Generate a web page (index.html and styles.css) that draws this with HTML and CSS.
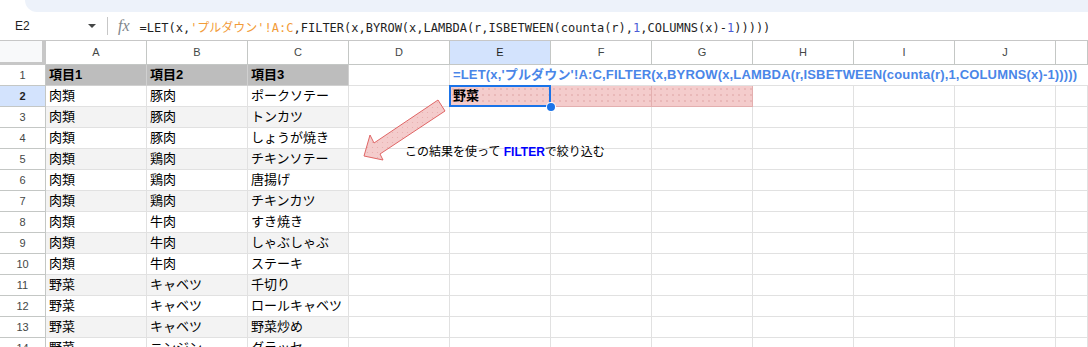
FILE: index.html
```html
<!DOCTYPE html>
<html lang="ja">
<head>
  <meta charset="UTF-8">
  <title>プルダウン - FILTER</title>
  <link rel="stylesheet" href="styles.css">
</head>
<body>
  <div class="topband"></div>

  <div class="formula-bar">
    <div class="name-box">E2</div>
    <span class="caret"></span>
    <span class="sep"></span>
    <span class="fx">fx</span>
    <div class="formula">=LET(x,<span class="ref">'プルダウン'!A:C</span>,FILTER(x,BYROW(x,LAMBDA(r,ISBETWEEN(counta(r),<span class="num">1</span>,COLUMNS(x)-<span class="num">1</span>)))))</div>
  </div>

  <div class="grid">
    <div class="corner"></div>
    <div class="ch">A</div><div class="ch">B</div><div class="ch">C</div><div class="ch">D</div>
    <div class="ch active">E</div><div class="ch">F</div><div class="ch">G</div><div class="ch">H</div>
    <div class="ch">I</div><div class="ch">J</div><div class="ch"></div>

    <div class="row">
      <div class="rh">1</div>
      <div class="c d hd">項目1</div><div class="c d hd">項目2</div><div class="c d hd">項目3</div>
      <div class="c"></div>
      <div class="c spilltext">=LET(x,'プルダウン'!A:C,FILTER(x,BYROW(x,LAMBDA(r,ISBETWEEN(counta(r),1,COLUMNS(x)-1)))))</div>
    </div>

    <div class="row">
      <div class="rh active">2</div>
      <div class="c d">肉類</div><div class="c d">豚肉</div><div class="c d">ポークソテー</div>
      <div class="c"></div>
      <div class="c spill sel"><b>野菜</b></div><div class="c spill"></div><div class="c spill"></div>
      <div class="c"></div><div class="c"></div><div class="c"></div><div class="c"></div>
    </div>

    <div class="row band">
      <div class="rh">3</div>
      <div class="c d">肉類</div><div class="c d">豚肉</div><div class="c d">トンカツ</div>
      <div class="c"></div><div class="c"></div><div class="c"></div><div class="c"></div>
      <div class="c"></div><div class="c"></div><div class="c"></div><div class="c"></div>
    </div>

    <div class="row">
      <div class="rh">4</div>
      <div class="c d">肉類</div><div class="c d">豚肉</div><div class="c d">しょうが焼き</div>
      <div class="c"></div><div class="c"></div><div class="c"></div><div class="c"></div>
      <div class="c"></div><div class="c"></div><div class="c"></div><div class="c"></div>
    </div>

    <div class="row band">
      <div class="rh">5</div>
      <div class="c d">肉類</div><div class="c d">鶏肉</div><div class="c d">チキンソテー</div>
      <div class="c"></div><div class="c"></div><div class="c"></div><div class="c"></div>
      <div class="c"></div><div class="c"></div><div class="c"></div><div class="c"></div>
    </div>

    <div class="row">
      <div class="rh">6</div>
      <div class="c d">肉類</div><div class="c d">鶏肉</div><div class="c d">唐揚げ</div>
      <div class="c"></div><div class="c"></div><div class="c"></div><div class="c"></div>
      <div class="c"></div><div class="c"></div><div class="c"></div><div class="c"></div>
    </div>

    <div class="row band">
      <div class="rh">7</div>
      <div class="c d">肉類</div><div class="c d">鶏肉</div><div class="c d">チキンカツ</div>
      <div class="c"></div><div class="c"></div><div class="c"></div><div class="c"></div>
      <div class="c"></div><div class="c"></div><div class="c"></div><div class="c"></div>
    </div>

    <div class="row">
      <div class="rh">8</div>
      <div class="c d">肉類</div><div class="c d">牛肉</div><div class="c d">すき焼き</div>
      <div class="c"></div><div class="c"></div><div class="c"></div><div class="c"></div>
      <div class="c"></div><div class="c"></div><div class="c"></div><div class="c"></div>
    </div>

    <div class="row band">
      <div class="rh">9</div>
      <div class="c d">肉類</div><div class="c d">牛肉</div><div class="c d">しゃぶしゃぶ</div>
      <div class="c"></div><div class="c"></div><div class="c"></div><div class="c"></div>
      <div class="c"></div><div class="c"></div><div class="c"></div><div class="c"></div>
    </div>

    <div class="row">
      <div class="rh">10</div>
      <div class="c d">肉類</div><div class="c d">牛肉</div><div class="c d">ステーキ</div>
      <div class="c"></div><div class="c"></div><div class="c"></div><div class="c"></div>
      <div class="c"></div><div class="c"></div><div class="c"></div><div class="c"></div>
    </div>

    <div class="row band">
      <div class="rh">11</div>
      <div class="c d">野菜</div><div class="c d">キャベツ</div><div class="c d">千切り</div>
      <div class="c"></div><div class="c"></div><div class="c"></div><div class="c"></div>
      <div class="c"></div><div class="c"></div><div class="c"></div><div class="c"></div>
    </div>

    <div class="row">
      <div class="rh">12</div>
      <div class="c d">野菜</div><div class="c d">キャベツ</div><div class="c d">ロールキャベツ</div>
      <div class="c"></div><div class="c"></div><div class="c"></div><div class="c"></div>
      <div class="c"></div><div class="c"></div><div class="c"></div><div class="c"></div>
    </div>

    <div class="row band">
      <div class="rh">13</div>
      <div class="c d">野菜</div><div class="c d">キャベツ</div><div class="c d">野菜炒め</div>
      <div class="c"></div><div class="c"></div><div class="c"></div><div class="c"></div>
      <div class="c"></div><div class="c"></div><div class="c"></div><div class="c"></div>
    </div>

    <div class="row">
      <div class="rh">14</div>
      <div class="c d">野菜</div><div class="c d">ニンジン</div><div class="c d">グラッセ</div>
      <div class="c"></div><div class="c"></div><div class="c"></div><div class="c"></div>
      <div class="c"></div><div class="c"></div><div class="c"></div><div class="c"></div>
    </div>
  </div>

  <!-- callout drawn over the sheet -->
  <svg class="arrow" width="1088" height="347" viewBox="0 0 1088 347">
    <defs>
      <pattern id="dots" width="5" height="5" patternUnits="userSpaceOnUse">
        <rect width="5" height="5" fill="#f4cccc"/>
        <circle cx="2.5" cy="2.5" r="0.6" fill="#e6aeae"/>
      </pattern>
    </defs>
    <polygon points="438,100 374,143 370,135 364,156 383,160 380,154 445,111"
             fill="url(#dots)" stroke="#e06666" stroke-width="1" stroke-linejoin="miter"/>
  </svg>
  <div class="note">この結果を使って <b class="kw">FILTER</b>で絞り込む</div>
</body>
</html>
```

FILE: styles.css
```css
body {
  margin: 0;
  width: 1088px;
  height: 347px;
  overflow: hidden;
  position: relative;
  background: #fff;
  color: #000;
  font-family: "Liberation Sans", Arial, "Noto Sans CJK JP", sans-serif;
}
.topband {
  height: 12px;
  margin-left: 25px;
  background: #edf2fa;
  border-bottom-left-radius: 12px;
}
.formula-bar {
  display: flex;
  align-items: center;
  height: 28px;
  border-bottom: 1px solid #c7c7c7;
}
.name-box {
  box-sizing: border-box;
  width: 88px;
  padding-left: 15px;
  font-size: 12px;
  color: #1f1f1f;
}
.caret {
  width: 0;
  height: 0;
  border-left: 4px solid transparent;
  border-right: 4px solid transparent;
  border-top: 4px solid #444746;
}
.sep {
  width: 1px;
  height: 18px;
  margin-left: 11px;
  background: #c7c7c7;
}
.fx {
  margin-left: 10px;
  font-family: "Liberation Serif", serif;
  font-style: italic;
  font-size: 16px;
  color: #80868b;
}
.formula {
  margin-left: 10px;
  font-family: "DejaVu Sans Mono", "Noto Sans CJK JP", monospace;
  font-size: 12px;
  color: #1f1f1f;
  white-space: nowrap;
}
.formula .ref {
  color: #f29b38;
}
.formula .num {
  color: #4b5bd6;
}

.grid {
  display: grid;
  grid-template-columns: 46px repeat(10, 101px) 1fr;
  grid-template-rows: 24px repeat(14, 21px);
}
.row {
  display: contents;
}
.corner {
  background: #f8f9fa;
  box-shadow: inset -4px -3px 0 #c7c7c7;
}
.ch {
  border-right: 1px solid #c4c7c5;
  border-bottom: 1px solid #c4c7c5;
  font-size: 11px;
  line-height: 23px;
  text-align: center;
  color: #444746;
}
.rh {
  border-right: 1px solid #c4c7c5;
  border-bottom: 1px solid #c4c7c5;
  font-size: 11px;
  line-height: 20px;
  text-align: center;
  color: #444746;
}
.ch.active,
.rh.active {
  background: #d3e3fd;
  color: #1f1f1f;
}
.rh.active {
  font-weight: bold;
}
.c {
  border-right: 1px solid #e1e1e1;
  border-bottom: 1px solid #e1e1e1;
  padding: 0 3px;
  font-size: 13px;
  line-height: 20px;
  white-space: nowrap;
  overflow: hidden;
}
.band .d {
  background: #f3f3f3;
}
.c.hd {
  background: #bdbdbd;
  border-right-color: #d0d0d0;
  border-bottom-color: #d0d0d0;
  font-weight: bold;
}
.spilltext {
  grid-column: span 7;
  border-right: none;
  overflow: visible;
  color: #4a86e8;
  font-weight: bold;
  letter-spacing: 0.17px;
}
.spill {
  background-color: #f4cccc;
  background-image: radial-gradient(circle, #e6b2b2 0.6px, transparent 1px);
  background-size: 6px 6px;
  border-right-color: #e3afaf;
  border-bottom-color: #e3afaf;
}
.sel {
  position: relative;
  overflow: visible;
}
.sel::after {
  content: "";
  position: absolute;
  left: -1px;
  top: -1px;
  right: -1px;
  bottom: -1px;
  border: 2px solid #1a73e8;
}
.sel::before {
  content: "";
  position: absolute;
  right: -5px;
  bottom: -5px;
  width: 8px;
  height: 8px;
  border-radius: 50%;
  background: #1a73e8;
  box-shadow: 0 0 0 1px #fff;
  z-index: 1;
}

.arrow {
  position: absolute;
  left: 0;
  top: 0;
  pointer-events: none;
}
.note {
  position: absolute;
  left: 405px;
  top: 144px;
  font-size: 12px;
  line-height: 16px;
  color: #000;
  white-space: nowrap;
}
.note .kw {
  color: #0000ff;
}
```
